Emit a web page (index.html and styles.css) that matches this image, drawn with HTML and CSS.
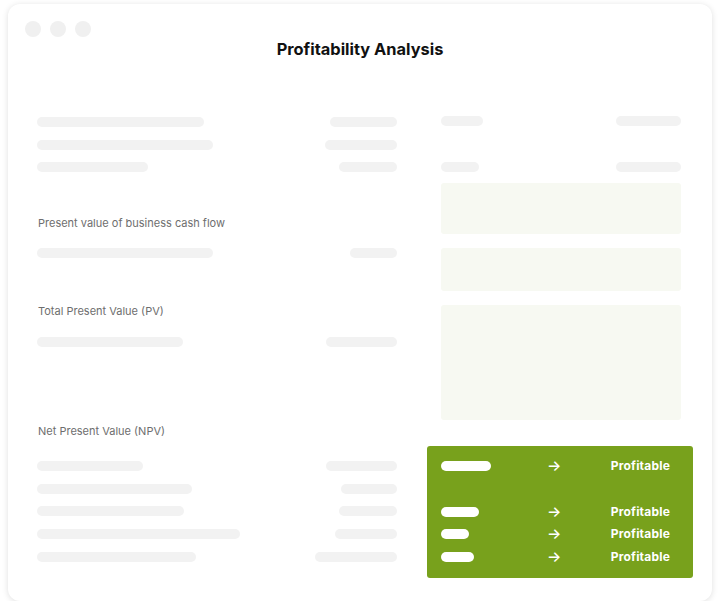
FILE: index.html
```html
<!DOCTYPE html>
<html lang="en">
<head>
<meta charset="utf-8">
<title>Profitability Analysis</title>
<link rel="stylesheet" href="styles.css">
</head>
<body>
<div class="card">
  <div class="dots"><span class="dot"></span><span class="dot"></span><span class="dot"></span></div>
  <h1 class="title">Profitability Analysis</h1>
  <div class="main">
    <div class="left">
      <div class="group g1">
        <div class="row"><span class="bar" style="width:167px"></span><span class="bar" style="width:67px"></span></div>
        <div class="row"><span class="bar" style="width:176px"></span><span class="bar" style="width:72px"></span></div>
        <div class="row"><span class="bar" style="width:111px"></span><span class="bar" style="width:58px"></span></div>
      </div>
      <div class="label l1">Present value of business cash flow</div>
      <div class="group g2">
        <div class="row"><span class="bar" style="width:176px"></span><span class="bar" style="width:47px"></span></div>
      </div>
      <div class="label l2">Total Present Value (PV)</div>
      <div class="group g3">
        <div class="row"><span class="bar" style="width:146px"></span><span class="bar" style="width:71px"></span></div>
      </div>
      <div class="label l3">Net Present Value (NPV)</div>
      <div class="group g4">
        <div class="row"><span class="bar" style="width:106px"></span><span class="bar" style="width:71px"></span></div>
        <div class="row"><span class="bar" style="width:155px"></span><span class="bar" style="width:56px"></span></div>
        <div class="row"><span class="bar" style="width:147px"></span><span class="bar" style="width:58px"></span></div>
        <div class="row"><span class="bar" style="width:203px"></span><span class="bar" style="width:62px"></span></div>
        <div class="row"><span class="bar" style="width:159px"></span><span class="bar" style="width:82px"></span></div>
      </div>
    </div>
    <div class="right">
      <div class="row r1"><span class="bar" style="width:42px"></span><span class="bar" style="width:65px"></span></div>
      <div class="row r2"><span class="bar" style="width:38px"></span><span class="bar" style="width:65px"></span></div>
      <div class="box b1"></div>
      <div class="box b2"></div>
      <div class="box b3"></div>
      <div class="result">
        <div class="res-row"><span class="pill" style="width:50px"></span><span class="arrow">→</span><span class="res-text">Profitable</span></div>
        <div class="res-row"></div>
        <div class="res-row"><span class="pill" style="width:38px"></span><span class="arrow">→</span><span class="res-text">Profitable</span></div>
        <div class="res-row"><span class="pill" style="width:28px"></span><span class="arrow">→</span><span class="res-text">Profitable</span></div>
        <div class="res-row"><span class="pill" style="width:33px"></span><span class="arrow">→</span><span class="res-text">Profitable</span></div>
      </div>
    </div>
  </div>
</div>
</body>
</html>
```

FILE: styles.css
```css
html, body {
  margin: 0;
  padding: 0;
  background: #ffffff;
}

body {
  font-family: Inter, "Liberation Sans", sans-serif;
}

.card {
  box-sizing: border-box;
  margin: 4px 8px 0 8px;
  width: 704px;
  height: 597px;
  border-radius: 12px;
  background: #ffffff;
  box-shadow: 0 1px 6px rgba(0, 0, 0, 0.13);
  padding: 17px 31px 0 29px;
}

.dots {
  display: flex;
  gap: 9px;
  margin-left: -12px;
}

.dot {
  width: 16px;
  height: 16px;
  border-radius: 50%;
  background: #f0f0f0;
}

.title {
  margin: 1px 0 0 0;
  font-size: 16.4px;
  line-height: 22px;
  font-weight: 700;
  color: #111111;
  text-align: center;
  padding-left: 2px;
}

.main {
  display: grid;
  grid-template-columns: 360px 240px;
  column-gap: 44px;
  margin-top: 57px;
}

.left, .right {
  display: flex;
  flex-direction: column;
}

.group {
  display: flex;
  flex-direction: column;
  gap: 12.6px;
}

.row {
  display: flex;
  justify-content: space-between;
  height: 10px;
}

.bar {
  display: block;
  height: 10px;
  border-radius: 5px;
  background: #f2f2f2;
}

.label {
  font-size: 11px;
  line-height: 14px;
  color: #6e6e6e;
  letter-spacing: 0;
  padding-left: 1px;
}

.l1 { margin-top: 44px; }
.g2 { margin-top: 18px; }
.l2 { margin-top: 46px; }
.g3 { margin-top: 18.7px; }
.l3 { margin-top: 77px; }
.g4 { margin-top: 23.3px; }

.r1 { margin-top: -1px; }
.r2 { margin-top: 35.7px; }

.box {
  background: #f7f9f2;
  border-radius: 3px;
}

.b1 { margin-top: 11.6px; height: 51px; }
.b2 { margin-top: 14px; height: 42.7px; }
.b3 { margin-top: 14px; height: 115px; }

.result {
  margin: 25.7px -12px 0 -14px;
  background: #78a11c;
  border-radius: 3px;
  padding: 9.5px 23px 9.6px 14px;
  display: flex;
  flex-direction: column;
}

.res-row {
  display: grid;
  grid-template-columns: 106px 12px 1fr;
  align-items: center;
  height: 22.6px;
}

.pill {
  display: block;
  height: 10px;
  border-radius: 5px;
  background: #ffffff;
}

.arrow {
  color: #ffffff;
  font-size: 15px;
  line-height: 16px;
  font-family: Inter, "DejaVu Sans", sans-serif;
  font-weight: 500;
}

.res-text {
  text-align: right;
  color: #ffffff;
  font-size: 12px;
  font-weight: 700;
  line-height: 16px;
  letter-spacing: 0.2px;
}
```
